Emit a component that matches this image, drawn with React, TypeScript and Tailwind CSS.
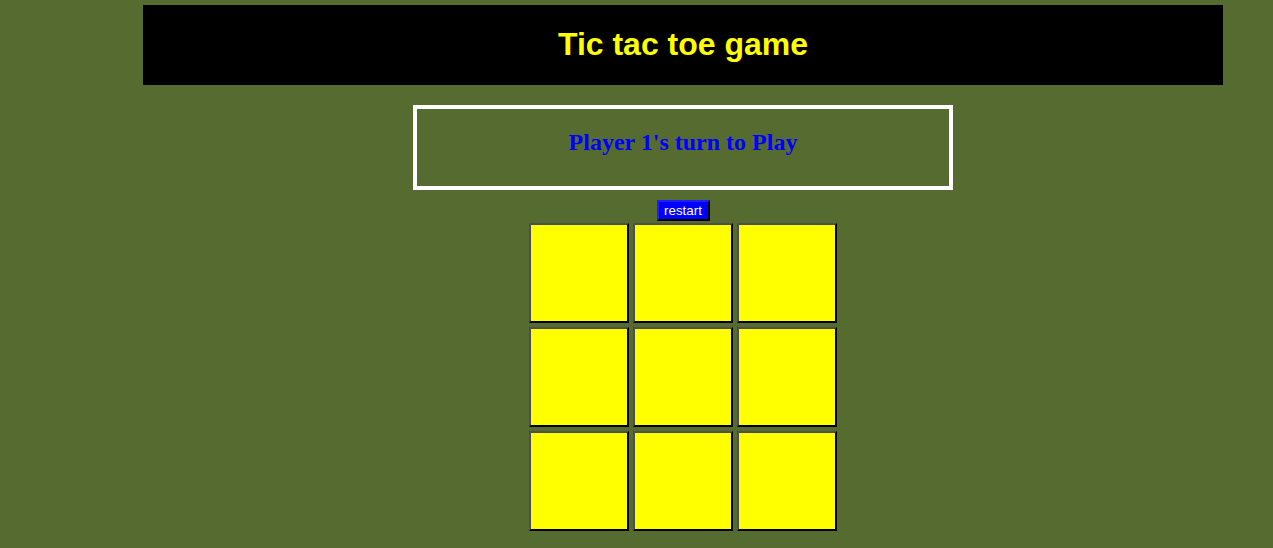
import React from "react";

export default function App() {
  const cells = Array.from({ length: 9 });
  return (
    <div className="min-h-[548px] w-full bg-[#556B2F] pt-[5px]">
      <div className="ml-[143px] w-[1080px] flex flex-col items-center">
        <div className="w-full h-[80px] bg-black flex items-center justify-center">
          <h1
            className="text-[32px] font-bold text-[#ffff00] leading-[37px] -mt-[1px]"
            style={{ fontFamily: '"Liberation Sans", Arial, sans-serif' }}
          >
            Tic tac toe game
          </h1>
        </div>
        <div className="mt-[20px] w-[540px] h-[85px] border-4 border-white pt-[20px] flex justify-center">
          <h2
            className="text-[24px] font-bold text-[#0000ff] leading-[27px]"
            style={{ fontFamily: '"Liberation Serif", "Times New Roman", serif' }}
          >
            Player 1's turn to Play
          </h2>
        </div>
        <button
          className="mt-[10px] w-[53px] h-[21px] bg-[#0000ff] text-white text-[13.33px] leading-[15px] border-2 border-t-[#2020ff] border-l-[#2020ff] border-r-black border-b-black flex items-center justify-center"
          style={{ fontFamily: '"Liberation Sans", Arial, sans-serif' }}
        >
          restart
        </button>
        <div className="mt-[2px] grid grid-cols-[100px_100px_100px] gap-[4px]">
          {cells.map((_, i) => (
            <div
              key={i}
              className="w-[100px] h-[100px] bg-[#ffff00] border-2 border-t-[#4f4f4f] border-l-[#4f4f4f] border-r-black border-b-black"
            />
          ))}
        </div>
      </div>
    </div>
  );
}
